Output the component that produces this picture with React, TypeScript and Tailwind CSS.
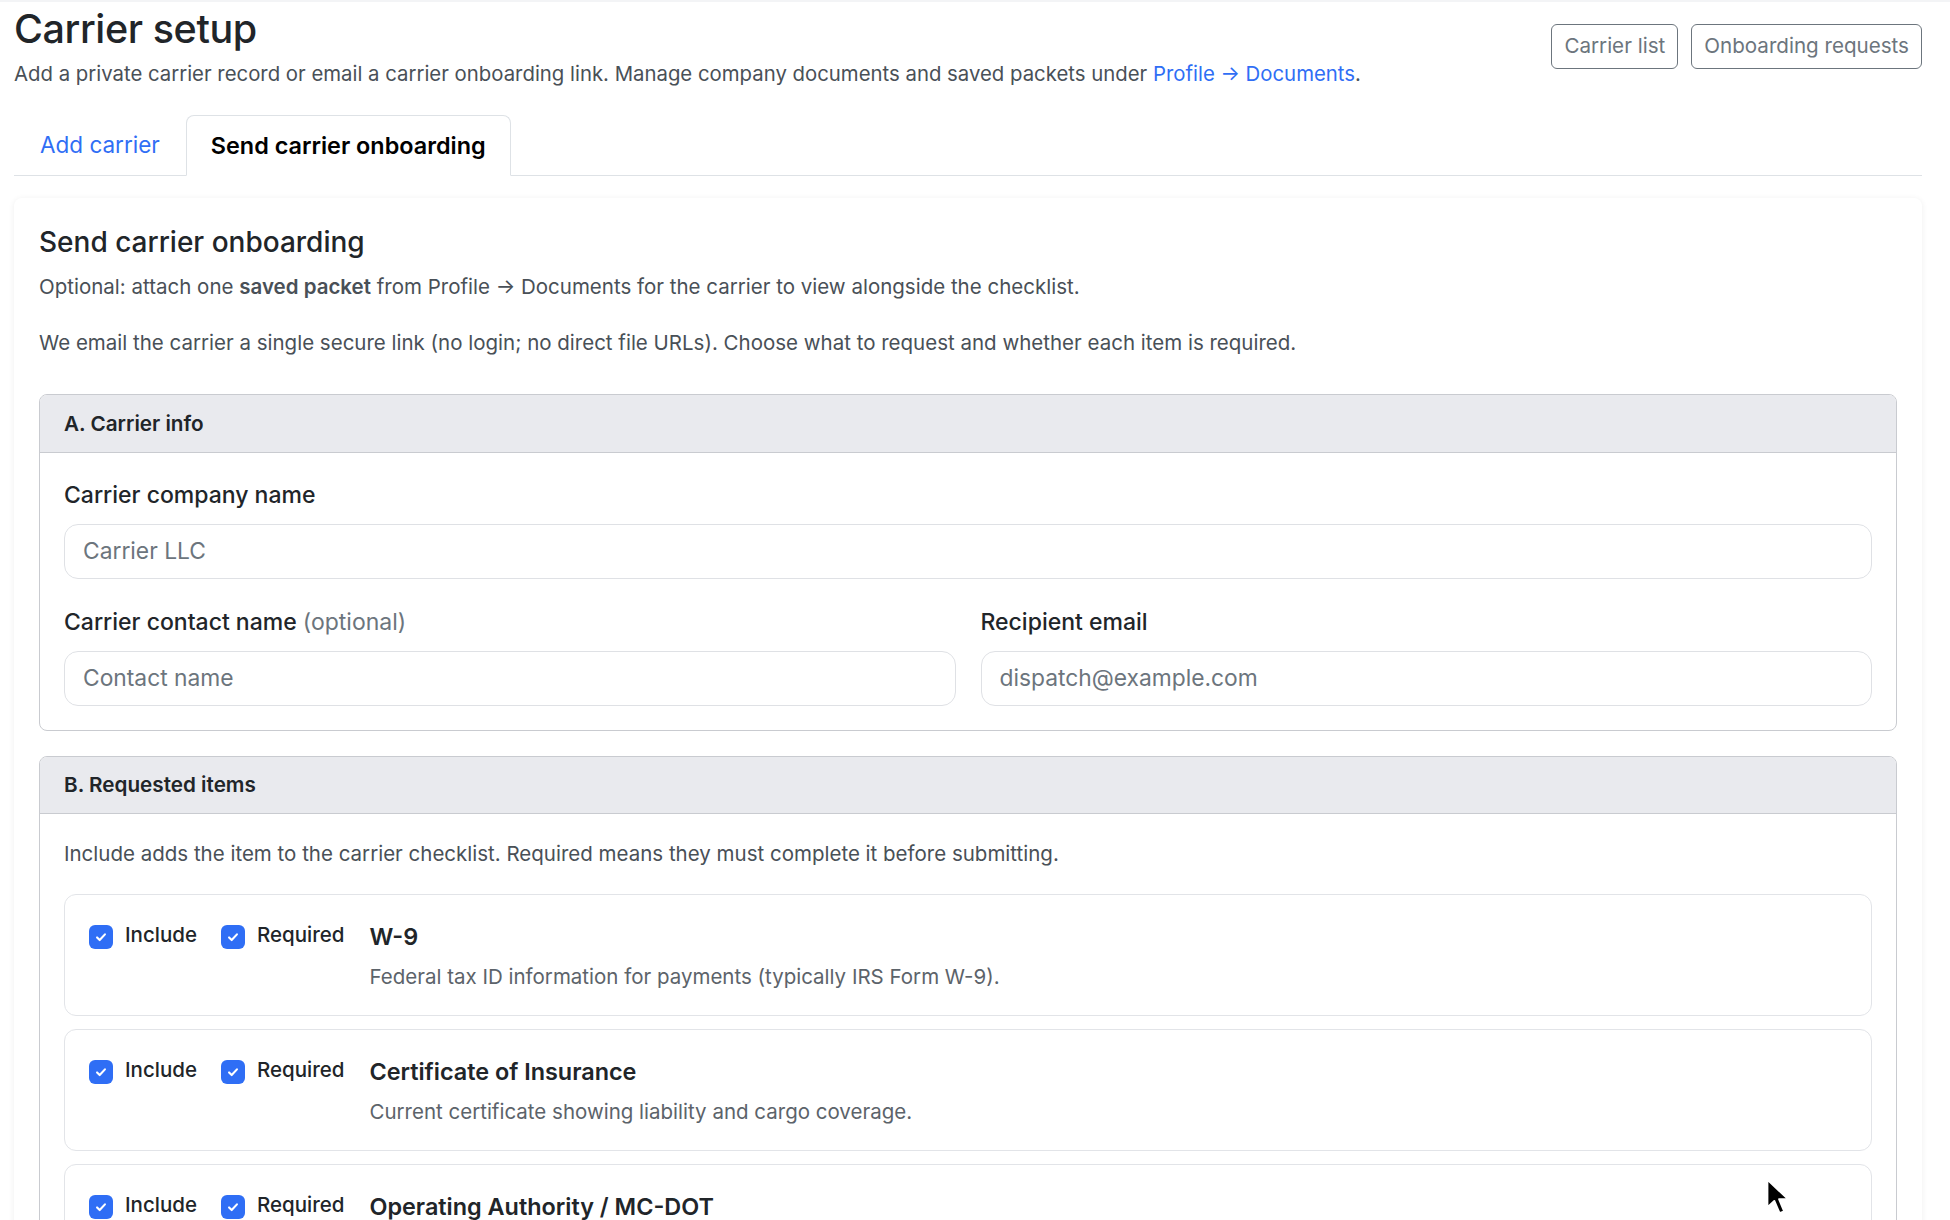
import React from "react";

const items = [
  {
    title: "W-9",
    desc: "Federal tax ID information for payments (typically IRS Form W-9).",
  },
  {
    title: "Certificate of Insurance",
    desc: "Current certificate showing liability and cargo coverage.",
  },
  {
    title: "Operating Authority / MC-DOT",
    desc: "Proof of active operating authority (MC number) and USDOT registration.",
  },
  {
    title: "Carrier agreement",
    desc: "Signed broker-carrier agreement.",
  },
];

function Checkbox() {
  return (
    <span className="flex h-[24px] w-[24px] shrink-0 items-center justify-center rounded-[6px] bg-[#2f6ef5]">
      <svg width="14" height="14" viewBox="0 0 16 16" fill="none">
        <path
          d="M3.5 8.5l3 3 6-6.5"
          stroke="white"
          strokeWidth="2.4"
          strokeLinecap="round"
          strokeLinejoin="round"
        />
      </svg>
    </span>
  );
}

function RequestItem({ title, desc }: { title: string; desc: string }) {
  return (
    <div className="flex rounded-[12px] border border-[#e2e4e8] bg-white px-[24px] pt-[25px] pb-[24px]">
      <div className="flex h-[29px] items-center gap-[12px] pt-[5px]">
        <Checkbox />
        <span className="-mt-[5px] text-[20.5px] font-medium leading-[29px] text-[#212529]">Include</span>
      </div>
      <div className="ml-[24px] flex h-[29px] items-center gap-[12px] pt-[5px]">
        <Checkbox />
        <span className="-mt-[5px] text-[20.5px] font-medium leading-[29px] text-[#212529]">Required</span>
      </div>
      <div className="ml-[25px] flex flex-col">
        <div className="text-[23.4px] font-semibold leading-[34px] text-[#212529]">{title}</div>
        <div className="mt-[8px] text-[20.5px] leading-[29px] text-[#5c636a]">{desc}</div>
      </div>
    </div>
  );
}

export default function App() {
  return (
    <div className="relative h-screen w-full overflow-hidden bg-white font-[Inter,sans-serif] text-[#212529]">
      <div className="h-[2px] bg-[#f3f4f6]" />
      <div className="pl-[14px] pr-[28px]">
        {/* header */}
        <div className="flex items-start justify-between">
          <div>
            <h1 className="pt-[6px] text-[39.5px] font-medium leading-[43px] tracking-[-0.4px] text-[#212529]">
              Carrier setup
            </h1>
            <p className="mt-[8px] text-[20.35px] leading-[30px] text-[#495057]">
              Add a private carrier record or email a carrier onboarding link. Manage company documents and saved
              packets under{" "}
              <a className="text-[#2f6ef5]" href="#">
                Profile → Documents
              </a>
              .
            </p>
          </div>
          <div className="mt-[22px] flex gap-[13px]">
            <button className="h-[45px] rounded-[6px] border border-[#6c757d] px-[12px] text-[20.6px] text-[#6c757d]">
              Carrier list
            </button>
            <button className="h-[45px] rounded-[6px] border border-[#6c757d] px-[12px] text-[20.6px] text-[#6c757d]">
              Onboarding requests
            </button>
          </div>
        </div>

        {/* tabs */}
        <div className="mt-[26px] flex border-b border-[#dee2e6]">
          <div className="flex h-[60px] items-center px-[26px] text-[22.5px] text-[#2f6ef5]">Add carrier</div>
          <div className="-mb-px flex h-[61px] items-center rounded-t-[8px] border border-[#dee2e6] border-b-white bg-white px-[24px] text-[23.4px] font-semibold text-black">
            Send carrier onboarding
          </div>
        </div>

        {/* card */}
        <div className="mt-[22px] rounded-[8px] bg-white px-[25px] pt-[27px] pb-[30px] shadow-[0_1px_6px_rgba(0,0,0,0.07)]">
          <h2 className="text-[28px] font-medium leading-[34px] text-[#212529]">Send carrier onboarding</h2>
          <p className="mt-[13px] text-[20.5px] leading-[30px] text-[#495057]">
            Optional: attach one <b className="font-semibold">saved packet</b> from Profile → Documents for the carrier
            to view alongside the checklist.
          </p>
          <p className="mt-[26px] text-[20.5px] leading-[30px] text-[#495057]">
            We email the carrier a single secure link (no login; no direct file URLs). Choose what to request and
            whether each item is required.
          </p>

          {/* section A */}
          <div className="mt-[36px] overflow-hidden rounded-[8px] border border-[#c9cbd0]">
            <div className="flex h-[58px] items-center border-b border-[#c9cbd0] bg-[#e9eaee] px-[24px] text-[20.7px] font-semibold">
              A. Carrier info
            </div>
            <div className="px-[24px] pt-[26px] pb-[24px]">
              <label className="block text-[23px] font-medium leading-[33px]">Carrier company name</label>
              <div className="mt-[12px] flex h-[55px] items-center rounded-[14px] border border-[#dfe1e5] px-[18px] text-[22.8px] text-[#6c757d]">
                Carrier LLC
              </div>
              <div className="mt-[27px] grid grid-cols-2 gap-[25px]">
                <div>
                  <label className="block text-[23px] font-medium leading-[33px]">
                    Carrier contact name <span className="font-normal text-[#6c757d]">(optional)</span>
                  </label>
                  <div className="mt-[12px] flex h-[55px] items-center rounded-[14px] border border-[#dfe1e5] px-[18px] text-[22.8px] text-[#6c757d]">
                    Contact name
                  </div>
                </div>
                <div>
                  <label className="block text-[23px] font-medium leading-[33px]">Recipient email</label>
                  <div className="mt-[12px] flex h-[55px] items-center rounded-[14px] border border-[#dfe1e5] px-[18px] text-[22.8px] text-[#6c757d]">
                    dispatch@example.com
                  </div>
                </div>
              </div>
            </div>
          </div>

          {/* section B */}
          <div className="mt-[25px] overflow-hidden rounded-[8px] border border-[#c9cbd0]">
            <div className="flex h-[57px] items-center border-b border-[#c9cbd0] bg-[#e9eaee] px-[24px] text-[20.7px] font-semibold">
              B. Requested items
            </div>
            <div className="px-[24px] pt-[25px] pb-[24px]">
              <p className="text-[20.5px] leading-[29px] text-[#495057]">
                Include adds the item to the carrier checklist. Required means they must complete it before submitting.
              </p>
              <div className="mt-[26px] flex flex-col gap-[13px]">
                {items.map((it) => (
                  <RequestItem key={it.title} title={it.title} desc={it.desc} />
                ))}
              </div>
            </div>
          </div>
        </div>
      </div>

      {/* mouse pointer */}
      <svg className="absolute left-[1765px] top-[1177px]" width="28" height="40" viewBox="0 0 24 34">
        <path
          d="M2 2 L2 26 L8 20.5 L12.5 31 L16.5 29.3 L12.2 19 L20 19 Z"
          fill="black"
          stroke="white"
          strokeWidth="1.8"
          strokeLinejoin="round"
        />
      </svg>
    </div>
  );
}
